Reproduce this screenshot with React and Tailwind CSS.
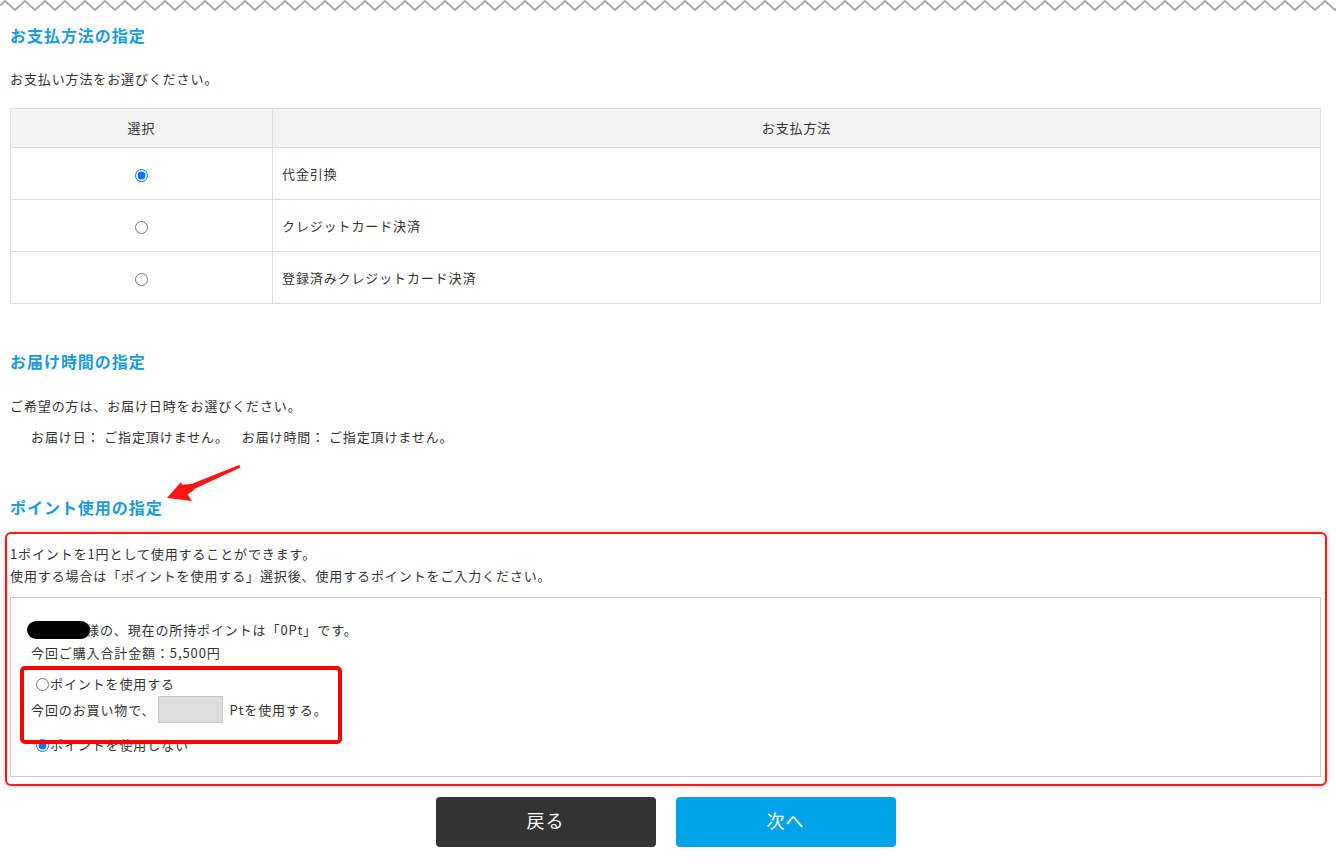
import React from "react";

const FONT = { fontFamily: '"Noto Sans CJK JP", "Noto Sans", sans-serif' };

function Zigzag() {
  return (
    <svg width="100%" height="12" className="block">
      <defs>
        <pattern id="zz" width="20" height="12" patternUnits="userSpaceOnUse">
          <polyline points="0,5.5 5,1 15,10 20,5.5" fill="none" stroke="#a8a8a8" strokeWidth="2" />
        </pattern>
      </defs>
      <rect x="0" y="0" width="100%" height="12" fill="url(#zz)" />
    </svg>
  );
}

function Radio({ checked }) {
  return (
    <input
      type="radio"
      readOnly
      checked={checked}
      className="w-[13px] h-[13px] m-0 align-middle"
    />
  );
}

export default function App() {
  const rows = [
    { label: "代金引換", checked: true },
    { label: "クレジットカード決済", checked: false },
    { label: "登録済みクレジットカード決済", checked: false },
  ];
  return (
    <div className="bg-white min-h-[868px] text-[#333] text-[13px] tracking-[0.068em]" style={FONT}>
      <Zigzag />
      <div className="pl-[10px] pr-[15px]">
        {/* Payment */}
        <h2 className="mt-[11px] text-[16px] leading-[24px] font-bold tracking-[0.06em] text-[#1a9ae0]">お支払方法の指定</h2>
        <p className="mt-[22px] leading-[20px]">お支払い方法をお選びください。</p>
        <table className="mt-[19px] w-full border-collapse border border-[#dddddd]">
          <thead>
            <tr className="bg-[#f3f3f3] h-[39px]">
              <th className="w-[262px] border border-[#dddddd] font-normal text-center">選択</th>
              <th className="border border-[#dddddd] font-normal text-center">お支払方法</th>
            </tr>
          </thead>
          <tbody>
            {rows.map((r) => (
              <tr key={r.label} className="h-[52px]">
                <td className="border border-[#dddddd] text-center">
                  <Radio checked={r.checked} />
                </td>
                <td className="border border-[#dddddd] pl-[9px]">{r.label}</td>
              </tr>
            ))}
          </tbody>
        </table>

        {/* Delivery */}
        <h2 className="mt-[45px] text-[16px] leading-[24px] font-bold tracking-[0.06em] text-[#1a9ae0]">お届け時間の指定</h2>
        <p className="mt-[23px] leading-[20px]">ご希望の方は、お届け日時をお選びください。</p>
        <div className="mt-[11px] leading-[20px] pl-[21px] flex">
          <span>お届け日： ご指定頂けません。</span>
          <span className="ml-[13px]">お届け時間： ご指定頂けません。</span>
        </div>

        {/* Points */}
        <div className="relative mt-[48px]">
          <h2 className="text-[16px] leading-[24px] font-bold tracking-[0.06em] text-[#1a9ae0]">ポイント使用の指定</h2>
          <svg className="absolute left-[148px] top-[-36px]" width="90" height="46" viewBox="0 0 90 46">
            <polygon points="81,6 82.5,8.5 34,31 31,26" fill="#ff1414" />
            <polygon points="9,39 23,23 25,29 34,42" fill="#ff1414" />
            <polygon points="21,26 33,25 36,31 26,38" fill="#ff1414" />
          </svg>
        </div>
        <div className="relative mt-[24px]">
          <p className="leading-[22px]">1ポイントを1円として使用することができます。</p>
          <p className="leading-[22px]">使用する場合は「ポイントを使用する」選択後、使用するポイントをご入力ください。</p>
          <div className="relative mt-[10px] border border-[#cccccc] pt-[20px] pb-[19px] pl-[20px]">
            <div className="h-[23px] flex items-center">
              <span className="inline-block w-[63px] h-[18px] bg-black rounded-[9px] ml-[-4px] mr-[-4px] relative z-10" />
              <span>様の、現在の所持ポイントは「0Pt」です。</span>
            </div>
            <div className="h-[23px] flex items-center">今回ご購入合計金額：5,500円</div>
            <div className="mt-[8px] h-[24px] flex items-center">
              <input type="radio" readOnly checked={false} name="pt" className="w-[13px] h-[13px] ml-[5px] mr-[1px]" />
              <span>ポイントを使用する</span>
            </div>
            <div className="h-[27px] flex items-center">
              <span>今回のお買い物で、</span>
              <input
                type="text"
                readOnly
                className="ml-[3px] w-[65px] h-[27px] bg-[#dddddd] border border-[#c8c8c8]"
              />
              <span className="ml-[6px]">Ptを使用する。</span>
            </div>
            <div className="mt-[10px] h-[24px] flex items-center">
              <input type="radio" readOnly checked={true} name="pt2" className="w-[13px] h-[13px] ml-[5px] mr-[1px]" />
              <span>ポイントを使用しない</span>
            </div>
            <div className="absolute left-[9px] top-[68px] w-[322px] h-[78px] border-[4px] border-[#ff0000] rounded-[5px]" />
          </div>
          <div className="absolute left-[-5px] top-[-11px] right-[-6px] bottom-[-9px] border-2 border-[#ff1a1a] rounded-[6px] shadow-[0_0_4px_rgba(0,0,0,0.25)] pointer-events-none" />
        </div>

        <div className="mt-[20px] flex justify-center gap-[20px]">
          <button className="w-[220px] h-[50px] pb-[4px] rounded-[4px] bg-[#333333] text-white text-[18px]">戻る</button>
          <button className="w-[220px] h-[50px] pb-[4px] rounded-[4px] bg-[#00a3e8] text-white text-[18px]">次へ</button>
        </div>
      </div>
    </div>
  );
}
